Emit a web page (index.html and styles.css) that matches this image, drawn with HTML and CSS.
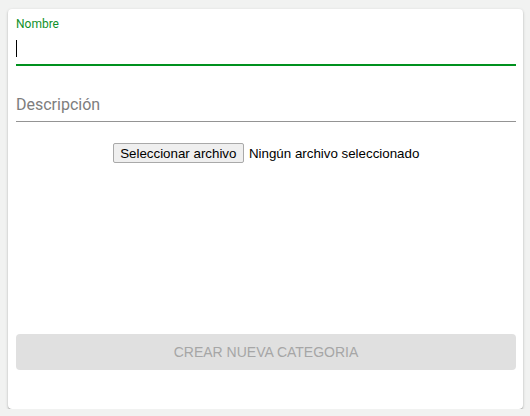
FILE: index.html
```html
<!DOCTYPE html>
<html lang="es">
<head>
<meta charset="utf-8">
<link rel="stylesheet" href="styles.css">
</head>
<body>
<div class="page">
  <form class="card">
    <div class="field">
      <label class="label label-focused">Nombre</label>
      <div class="input-root focused">
        <div class="input"><span class="caret"></span></div>
      </div>
    </div>
    <div class="field field-second">
      <div class="input-root">
        <div class="input placeholder">Descripción</div>
      </div>
    </div>
    <div class="file-row">
      <span class="file-btn">Seleccionar archivo</span>
      <span class="file-text">Ningún archivo seleccionado</span>
    </div>
    <div class="submit">CREAR NUEVA CATEGORIA</div>
  </form>
</div>
</body>
</html>
```
FILE: styles.css
```css
html, body {
  margin: 0;
  padding: 0;
  background: #f1f2f1;
}
.page {
  padding: 9px 7px 0 8px;
}
.card {
  box-sizing: border-box;
  width: 515px;
  height: 400px;
  background: #fff;
  border-radius: 4px;
  box-shadow: 0 1px 3px rgba(0,0,0,0.22), 0 1px 1px rgba(0,0,0,0.16), 0 2px 1px -1px rgba(0,0,0,0.14);
  padding: 8px 7px 39px 8px;
  display: flex;
  flex-direction: column;
  font-family: Roboto, "Liberation Sans", sans-serif;
}
.field {
  position: relative;
  padding-top: 16px;
}
.field-second {
  margin-top: 7px;
}
.label {
  position: absolute;
  left: 0;
  top: 1px;
  font-size: 12px;
  line-height: 12px;
}
.label-focused {
  color: #0f912a;
}
.input-root {
  position: relative;
  border-bottom: 1px solid #949494;
}
.input-root.focused {
  border-bottom: 2px solid #00911e;
}
.input {
  height: 19px;
  padding: 6px 0 7px;
  font-size: 16px;
  line-height: 19px;
  color: #222;
}
.input-root.focused .input {
  padding-bottom: 6px;
}
.placeholder {
  color: #7d7d7d;
}
.caret {
  display: inline-block;
  width: 1px;
  height: 17px;
  margin-top: 1px;
  background: #000;
  vertical-align: top;
}
.file-row {
  margin-top: 21px;
  display: flex;
  justify-content: center;
  align-items: center;
  font-family: "Liberation Sans", Arial, sans-serif;
  font-size: 13.333px;
  color: #000;
}
.file-btn {
  box-sizing: border-box;
  height: 20px;
  padding: 0 6.5px;
  display: flex;
  align-items: center;
  background: #efefef;
  border: 1px solid #a9a9a9;
  border-radius: 2px;
  margin-right: 5px;
}
.submit {
  margin-top: auto;
  height: 36px;
  border-radius: 4px;
  background: #e0e0e0;
  color: #a6a6a6;
  font-family: "Liberation Sans", Arial, sans-serif;
  font-size: 14px;
  display: flex;
  align-items: center;
  justify-content: center;
}
```
